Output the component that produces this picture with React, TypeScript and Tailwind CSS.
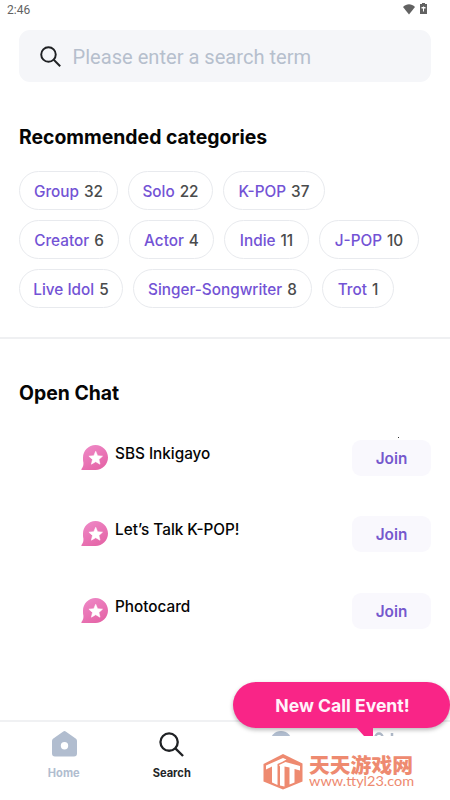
import clsx from "clsx";

const categoryRows = [
    [
        { name: "Group", count: 32, width: "w-[99px]" },
        { name: "Solo", count: 22, width: "w-[85px]" },
        { name: "K-POP", count: 37, width: "w-[102px]" },
    ],
    [
        { name: "Creator", count: 6, width: "w-[100px]" },
        { name: "Actor", count: 4, width: "w-[85px]" },
        { name: "Indie", count: 11, width: "w-[85px]" },
        { name: "J-POP", count: 10, width: "w-[100px]" },
    ],
    [
        { name: "Live Idol", count: 5, width: "w-[104px]" },
        { name: "Singer-Songwriter", count: 8, width: "w-[179px]" },
        { name: "Trot", count: 1, width: "w-[72px]" },
    ],
];

const chats = ["SBS Inkigayo", "Let’s Talk K-POP!", "Photocard"];

function SearchIcon({ className }: { className?: string }) {
    return (
        <svg viewBox="0 0 26 26" fill="none" stroke="#1f2124" strokeWidth="2.4" className={className}>
            <circle cx="10.5" cy="10.5" r="9" />
            <path d="M17 17L25 25" />
        </svg>
    );
}

function StarBubble() {
    return (
        <svg viewBox="0 0 27 25" className="mt-[5px] h-[25px] w-[27px]">
            <defs>
                <linearGradient id="bubble" x1="0" y1="0" x2="0.6" y2="1">
                    <stop offset="0" stopColor="#ef8bc9" />
                    <stop offset="1" stopColor="#e566a8" />
                </linearGradient>
            </defs>
            <path
                d="M14.5 0C21.4 0 27 5.6 27 12.5S21.4 25 14.5 25H1C-.2 25 .2 24 1 23.2C2.3 21.5 2.5 20 2.4 17.5C2 16 2 14.5 2 12.5C2 5.6 7.6 0 14.5 0Z"
                fill="url(#bubble)"
            />
            <path
                d="M14.7 6.3L16.6 10.7L21.5 11.2L17.9 14.4L19 19.2L14.7 16.7L10.4 19.2L11.5 14.4L7.9 11.2L12.8 10.7Z"
                fill="#fff"
                stroke="#fff"
                strokeWidth="0.6"
                strokeLinejoin="round"
            />
        </svg>
    );
}

function StatusBar() {
    return (
        <div className="flex h-[30px] items-start justify-between pr-[23px] pl-[7px] text-[#626262]">
            <span className="mt-[3px] font-[Roboto] text-[12px] leading-[14px]">2:46</span>
            <div className="flex items-start gap-[5px]">
                <svg viewBox="0 0 12 11" className="mt-1 h-[11px] w-3" fill="currentColor">
                    <path d="M0 3C3.5-.7 8.5-.7 12 3L6 10.5Z" />
                </svg>
                <svg viewBox="0 0 7 11" className="mt-[3px] h-[11px] w-[7px]" fill="currentColor">
                    <path d="M2 0H5V1H7V11H0V1H2Z" />
                    <path d="M3 3.5H4V8.5H3ZM1.5 4H5.5V5.5H1.5Z" fill="#fff" />
                </svg>
            </div>
        </div>
    );
}

function Categories() {
    return (
        <section className="h-[257px] border-b-2 border-[#eff0f2] px-[19px] pt-[43px]">
            <h2 className="text-[19.4px] leading-6 font-bold">Recommended categories</h2>
            <div className="mt-[22px] flex flex-col gap-[10px]">
                {categoryRows.map((row, i) => (
                    <div key={i} className="flex gap-[10px]">
                        {row.map((c) => (
                            <button
                                key={c.name}
                                className={clsx(
                                    "flex h-[39px] shrink-0 items-center justify-center gap-[5px] rounded-full border border-[#e8eaee] pt-[3px] text-[15.3px] font-medium whitespace-nowrap text-[#7353d5]",
                                    c.width,
                                )}
                            >
                                {c.name}
                                <span className="text-[#4a4b4c]">{c.count}</span>
                            </button>
                        ))}
                    </div>
                ))}
            </div>
        </section>
    );
}

function OpenChat() {
    return (
        <section className="h-[381px] px-[19px] pt-[42px]">
            <h2 className="text-[19.4px] leading-6 font-bold">Open Chat</h2>
            <div className="relative mt-[35px] flex flex-col gap-[40.4px]">
                {chats.map((chat) => (
                    <div key={chat} className="flex h-9 items-start pl-[62px]">
                        <StarBubble />
                        <span className="mt-[4px] ml-[7px] text-[15.3px] leading-5 font-medium">{chat}</span>
                        <button className="ml-auto h-9 w-[79px] rounded-[9px] bg-[#f9f8fd] pt-[3px] text-[15.3px] font-semibold text-[#7558cd]">
                            Join
                        </button>
                    </div>
                ))}
                <i className="absolute -top-[3px] left-[379px] size-px bg-[#333]" />
            </div>
        </section>
    );
}

function BottomNav() {
    return (
        <nav className="grid h-20 grid-cols-4 border-t-2 border-[#f0f1f3] px-[10px] text-[11.1px] leading-[14px] font-bold">
            <div className="flex flex-col items-center pt-[9px] text-[#b1bdcf]">
                <svg viewBox="0 0 25 26" className="ml-px h-[26px] w-[25px]" fill="currentColor">
                    <path
                        fillRule="evenodd"
                        d="M11.3.5Q12.5-.3 13.7.5L24 7.8Q25 8.6 25 10V22.5Q25 25.5 22 25.5H3Q0 25.5 0 22.5V10Q0 8.6 1 7.8ZM12.5 11A3.7 3.7 0 1 0 12.5 18.4A3.7 3.7 0 1 0 12.5 11Z"
                    />
                </svg>
                <span className="mt-[9px]">Home</span>
            </div>
            <div className="flex flex-col items-center pt-[10px] pl-px text-[#242527]">
                <SearchIcon className="h-[25px] w-[25px]" />
                <span className="mt-[9px]">Search</span>
            </div>
            <div className="flex justify-center pt-[9px] pl-[5px]">
                <span className="size-[22px] rounded-full bg-[#b1bdcf]" />
            </div>
            <div className="flex justify-center pt-[10px]">
                <svg viewBox="0 0 24 20" className="h-5 w-6" fill="none" stroke="#aeb8c7" strokeWidth="2.5">
                    <circle cx="5" cy="5" r="3.5" />
                    <path d="M18 1V12" />
                </svg>
            </div>
        </nav>
    );
}

function EventBubble() {
    return (
        <div className="absolute top-[682px] left-[233px] h-[54px] w-[217px]">
            <div className="flex h-[46px] items-center justify-center rounded-full bg-[#f92587] pt-[2px] pl-[2px] text-[17.6px] font-bold text-[#fff3fa] shadow-[0_2px_4px_rgba(0,0,0,0.28)]">
                New Call Event!
            </div>
            <svg viewBox="0 0 17 9" className="absolute top-[45px] left-[123px] h-[9px] w-[17px]">
                <path d="M0 0H17V9H8Z" fill="#f92587" />
            </svg>
        </div>
    );
}

function SiteMark() {
    return (
        <div className="absolute top-[736px] left-[250px] flex h-16 w-[200px] bg-white pl-[13px] text-[#ee8a70]">
            <svg viewBox="0 0 40 36" className="mt-[18px] h-9 w-10 shrink-0">
                <path d="M20 0L39.5 9.5V27.5L20 35.5L.5 27.5V10Z" fill="currentColor" />
                <path
                    d="M3 11.5L20 4L23.5 5.5L19 8L14.5 10V31L9 28.5V12.5L3 15.5ZM16 11L22.5 8L37 12V16.5L31.5 15V28.5L26.5 30.5V13.5L21.5 12.5V32.5L17 31.5V12.5Z"
                    fill="#fff"
                />
            </svg>
            <div className="mt-[18px] ml-[6px] w-[104px] whitespace-nowrap">
                <div className="h-[21px] font-['Noto_Sans_CJK_SC',sans-serif] text-[20.8px] leading-5 font-black">
                    天天游戏网
                </div>
                <div className="w-[88px] origin-left scale-x-[1.15] font-[Lato] text-[12.6px] leading-[13px]">
                    www.ttyl23.com
                </div>
            </div>
        </div>
    );
}

export default function App() {
    return (
        <div className="relative h-[800px] w-[450px] overflow-hidden bg-white font-[Inter,sans-serif] text-[#050505]">
            <StatusBar />
            <div className="mx-[19px] flex h-[52px] items-center rounded-[11px] bg-[#f5f6f9] pl-[21px]">
                <SearchIcon className="h-[21px] w-[21px]" />
                <span className="ml-[11.5px] pt-[2px] font-[Roboto] text-[20.1px] text-[#b6bfcd]">Please enter a search term</span>
            </div>
            <Categories />
            <OpenChat />
            <BottomNav />
            <EventBubble />
            <SiteMark />
        </div>
    );
}
